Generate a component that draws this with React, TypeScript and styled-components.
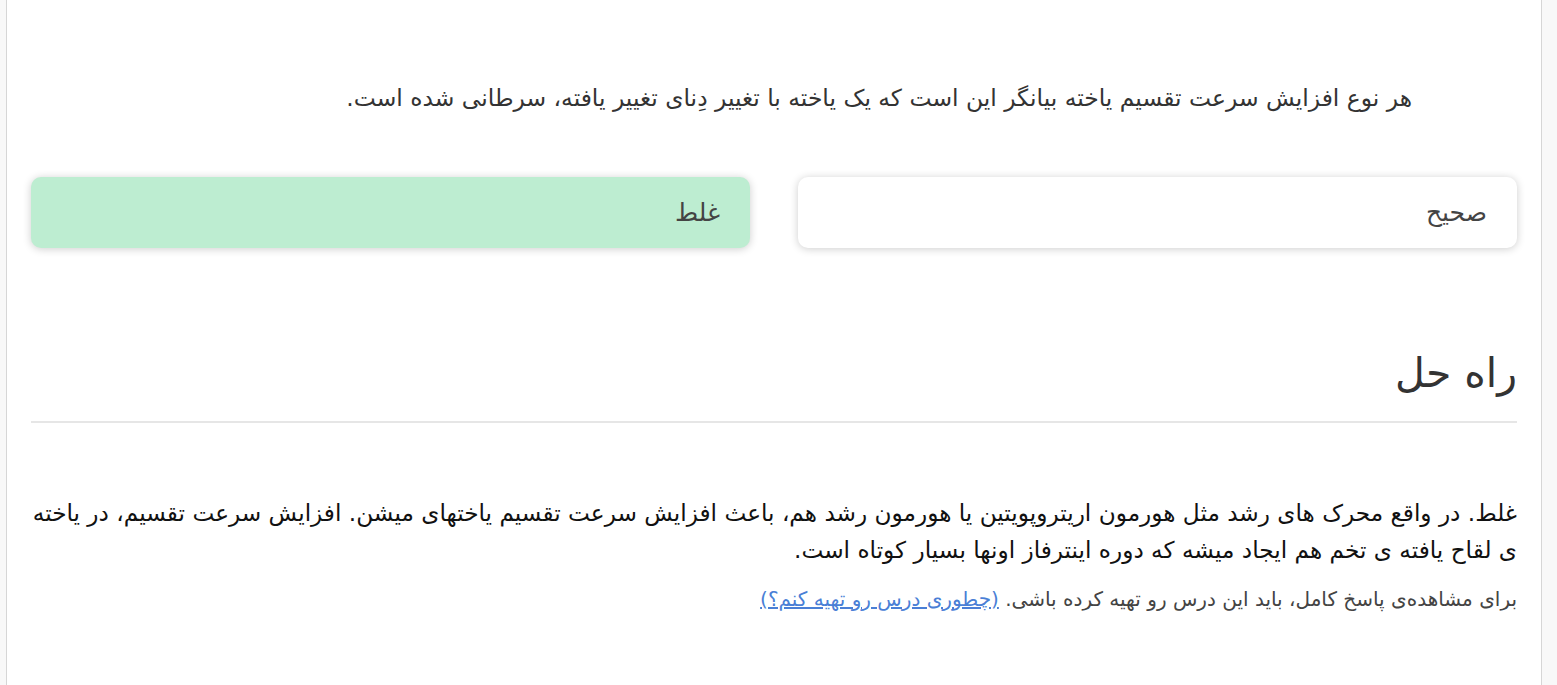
import React from "react";
import styled, { createGlobalStyle } from "styled-components";

const Global = createGlobalStyle`
  html, body { margin: 0; padding: 0; background: #f8f8f8; }
  body { font-family: "DejaVu Sans", "Noto Sans", sans-serif; color: #333; }
`;

const Page = styled.div`
  direction: rtl;
  margin-left: 6px;
  width: 1536px;
  min-height: 685px;
  box-sizing: border-box;
  background: #fff;
  border-left: 1px solid #d6d6d6;
  border-right: 1px solid #d6d6d6;
  padding: 74px 24px 40px 24px;
`;

const Question = styled.p`
  margin: 0;
  padding-right: 105px;
  font-size: 23.4px;
  line-height: 48px;
  color: #333;
`;

const Options = styled.div`
  display: grid;
  grid-template-columns: 1fr 1fr;
  gap: 48px;
  margin-top: 55px;
`;

const Option = styled.div<{ $selected?: boolean }>`
  height: 71px;
  box-sizing: border-box;
  border-radius: 10px;
  background: ${(p) => (p.$selected ? "#bdedd1" : "#fff")};
  box-shadow: 0 1px 8px rgba(0, 0, 0, 0.2);
  display: flex;
  align-items: center;
  padding: 0 30px;
  font-size: 25px;
  color: #444;
`;

const Heading = styled.h2`
  margin: 95px 0 0;
  font-size: 41px;
  font-weight: normal;
  color: #333;
  line-height: 60px;
  padding-bottom: 18px;
  border-bottom: 2px solid #e6e6e6;
`;

const Body = styled.p`
  margin: 71px 0 0;
  font-size: 23.2px;
  line-height: 37px;
  color: #111;
`;

const Note = styled.p`
  margin: 16px 0 0;
  font-size: 20px;
  line-height: 30px;
  color: #444;
`;

const Link = styled.a`
  color: #4a7fd6;
  text-decoration: underline;
`;

export default function App() {
  return (
    <>
      <Global />
      <Page>
        <Question>
          هر نوع افزایش سرعت تقسیم یاخته بیانگر این است که یک یاخته با تغییر دِنای تغییر یافته، سرطانی شده است.
        </Question>
        <Options>
          <Option>صحیح</Option>
          <Option $selected>غلط</Option>
        </Options>
        <Heading>راه حل</Heading>
        <Body>
          غلط. در واقع محرک های رشد مثل هورمون اریتروپویتین یا هورمون رشد هم، باعث افزایش سرعت تقسیم یاختهای میشن. افزایش سرعت تقسیم، در یاخته ی لقاح یافته ی تخم هم ایجاد میشه که دوره اینترفاز اونها بسیار کوتاه است.
        </Body>
        <Note>
          برای مشاهده‌ی پاسخ کامل، باید این درس رو تهیه کرده باشی. <Link href="#">(چطوری درس رو تهیه کنم؟)</Link>
        </Note>
      </Page>
    </>
  );
}
